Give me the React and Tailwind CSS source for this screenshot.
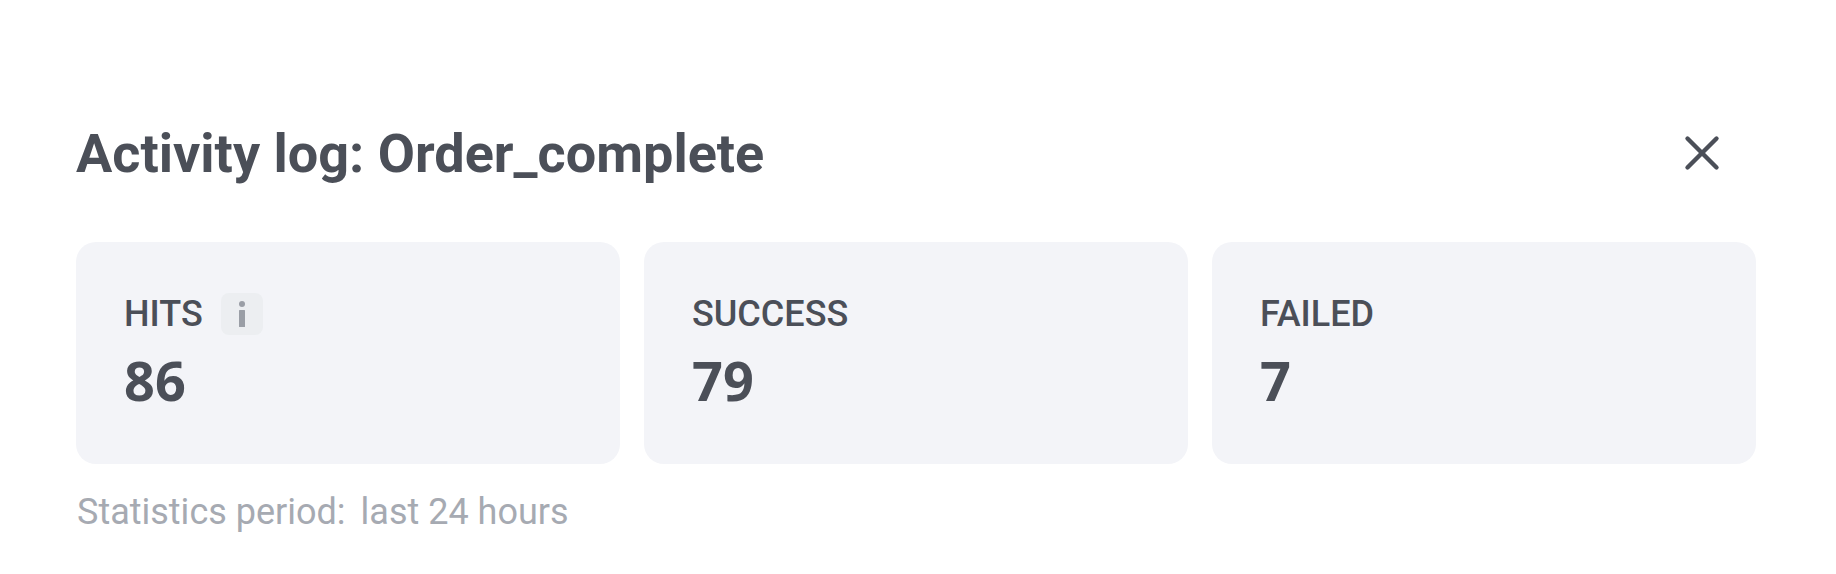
import React from "react";
import { X } from "lucide-react";

function Card({ label, value, info }) {
  return (
    <div className="flex-1 h-[222px] rounded-[20px] bg-[#f3f4f8] pl-[48px] pt-[50px]">
      <div className="flex items-center h-[44px]">
        <span className="text-[36px] font-medium leading-[44px] text-[#4b4f58] font-['Roboto',sans-serif]">{label}</span>
        {info && (
          <span className="ml-[18px] w-[42px] h-[42px] rounded-[8px] bg-[#eceef1] flex items-center justify-center">
            <svg width="8" height="26" viewBox="0 0 8 26" fill="#9a9ea6">
              <circle cx="4" cy="3" r="3" />
              <rect x="1" y="9" width="6" height="17" rx="0.5" />
            </svg>
          </span>
        )}
      </div>
      <div className="mt-[12px] text-[54px] font-bold leading-[64px] text-[#4b4f58] font-['Noto_Sans',sans-serif]">{value}</div>
    </div>
  );
}

export default function App() {
  return (
    <div className="w-[1836px] h-[574px] bg-white overflow-hidden pl-[76px] pr-[80px] pt-[122px]">
      <div className="flex items-center justify-between h-[62px]">
        <h1 className="mt-[2px] text-[54px] font-bold leading-[62px] text-[#4b4f58] font-['Roboto',sans-serif]">Activity log: Order_complete</h1>
        <X className="mr-[25px] w-[58px] h-[58px] text-[#4b4f58]" strokeWidth={1.8} />
      </div>
      <div className="mt-[58px] flex gap-[24px]">
        <Card label="HITS" value="86" info />
        <Card label="SUCCESS" value="79" />
        <Card label="FAILED" value="7" />
      </div>
      <p className="mt-[26px] pl-[1px] text-[36px] font-normal leading-[44px] text-[#a6aab2] font-['Roboto',sans-serif]">
        <span>Statistics period:</span>
        <span className="ml-[15px]">last 24 hours</span>
      </p>
    </div>
  );
}
